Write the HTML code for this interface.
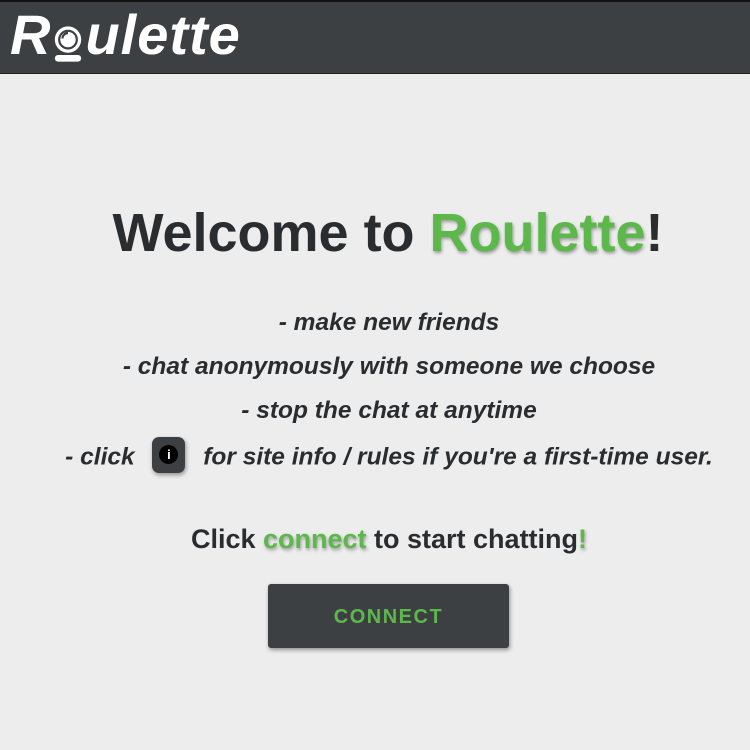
<!DOCTYPE html>
<html><head><style>
body{margin:0;width:750px;height:750px;background:#ededed;font-family:"Liberation Sans",sans-serif;overflow:hidden;position:relative}
.hdr{position:absolute;left:0;top:0;width:750px;height:74px;background:#3d4043;border-top:2px solid #111;box-sizing:border-box;border-bottom:1px solid #222}
.logo{position:absolute;left:10px;top:0px;font-size:56px;font-weight:bold;font-style:italic;color:#fff;letter-spacing:1px}
.g{color:#5cb84a;text-shadow:1px 2px 3px rgba(0,0,0,.35)}
h1{position:absolute;top:201px;left:13px;width:750px;text-align:center;margin:0;font-size:54px;color:#2a2d2f;line-height:64px}
.l{position:absolute;left:14px;width:750px;text-align:center;font-size:24.5px;font-weight:bold;font-style:italic;color:#2a2d2f}
.ib{display:inline-block;width:33px;height:36px;background:#3d4043;border-radius:7px;vertical-align:middle;margin:0 11px;position:relative;top:-3px;box-shadow:1px 2px 4px rgba(0,0,0,.4)}
.ib:after{content:"i";position:absolute;left:7px;top:8px;width:19px;height:19px;border-radius:50%;background:#000;color:#fff;font-size:13px;font-style:normal;line-height:19px;text-align:center}
.c{position:absolute;top:524px;left:14px;width:750px;text-align:center;font-size:27px;font-weight:bold;color:#2a2d2f}
.btn{position:absolute;left:268px;top:584px;width:241px;height:64px;background:#3d4043;border-radius:3px;color:#5cb84a;font-weight:bold;font-size:20px;letter-spacing:1.5px;text-align:center;line-height:66px;box-shadow:1px 2px 4px rgba(0,0,0,.4)}
</style></head><body>
<div class="hdr"><div class="logo">R<span style="display:inline-block;width:34px;position:relative"><svg width="34" height="44" viewBox="0 0 30 40" style="position:absolute;left:0;top:-32px"><circle cx="15" cy="16" r="12" fill="#fff"/><circle cx="15" cy="16" r="8" fill="none" stroke="#3d4043" stroke-width="2"/><path d="M10 15a5 5 0 0 1 5-5" stroke="#3d4043" stroke-width="2" fill="none"/><rect x="3" y="30" width="24" height="6" rx="3" fill="#fff"/></svg></span>ulette</div></div>
<h1>Welcome to <span class="g">Roulette</span>!</h1>
<div class="l" style="top:309px">- make new friends</div>
<div class="l" style="top:353px">- chat anonymously with someone we choose</div>
<div class="l" style="top:397px">- stop the chat at anytime</div>
<div class="l" style="top:440px">- click <span class="ib"></span> for site info / rules if you're a first-time user.</div>
<div class="c">Click <span class="g">connect</span> to start chatting<span class="g">!</span></div>
<div class="btn">CONNECT</div>
</body></html>
